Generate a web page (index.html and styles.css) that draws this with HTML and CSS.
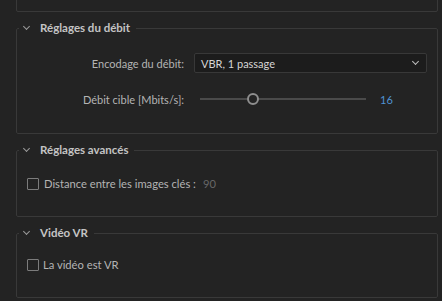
FILE: index.html
```html
<!DOCTYPE html>
<html lang="fr">
<head>
  <meta charset="UTF-8" />
  <title>Réglages</title>
  <link rel="stylesheet" href="styles.css">
</head>
<body>
  <div class="panels">
    <fieldset class="panel panel-top"></fieldset>

    <fieldset class="panel panel-bitrate">
      <legend><span class="chev"></span>Réglages du débit</legend>
      <div class="form-grid">
        <label class="lbl" for="enc">Encodage du débit:</label>
        <div class="select" id="enc">
          <span>VBR, 1 passage</span>
          <span class="select-chev"></span>
        </div>

        <label class="lbl">Débit cible [Mbits/s]:</label>
        <div class="slider-row">
          <div class="track"><span class="knob"></span></div>
          <span class="value">16</span>
        </div>
      </div>
    </fieldset>

    <fieldset class="panel panel-adv">
      <legend><span class="chev"></span>Réglages avancés</legend>
      <div class="check-row">
        <span class="box"></span>
        <span>Distance entre les images clés :</span>
        <span class="dim">90</span>
      </div>
    </fieldset>

    <fieldset class="panel panel-vr">
      <legend><span class="chev"></span>Vidéo VR</legend>
      <div class="check-row vr">
        <span class="box"></span>
        <span>La vidéo est VR</span>
      </div>
    </fieldset>
  </div>
</body>
</html>
```

FILE: styles.css
```css
html, body {
  margin: 0;
  background: #232323;
  overflow: hidden;
  height: 301px;
}
body {
  font-family: 'Lato', 'Liberation Sans', sans-serif;
  font-size: 11px;
  color: #b4b4b4;
}
.panels {
  padding: 0 4px 0 16px;
  margin-top: -40px;
}
.panel {
  margin: 0 0 9px 0;
  border: 1px solid #393939;
  border-radius: 2px;
  padding: 0;
  min-width: 0;
}
.panel-top {
  height: 50px;
}
legend {
  margin-left: 2px;
  padding: 0 6px 0 4px;
  font-weight: bold;
  font-size: 11.5px;
  color: #c4c4c4;
  line-height: 14px;
  display: flex;
  align-items: center;
}
.chev {
  width: 4px;
  height: 4px;
  border-right: 1px solid #9a9a9a;
  border-bottom: 1px solid #9a9a9a;
  transform: rotate(45deg);
  margin: -3px 11px 0 1px;
}
.form-grid {
  display: grid;
  grid-template-columns: 167px 1fr;
  column-gap: 10px;
  align-items: center;
  row-gap: 16px;
  padding: 18px 10px 24px 0;
}
.lbl {
  text-align: right;
}
.select {
  height: 18px;
  border: 1px solid #383838;
  background: #1c1c1c;
  border-radius: 2px;
  display: flex;
  align-items: center;
  justify-content: space-between;
  padding: 0 8px 0 6px;
  color: #d6d6d6;
}
.select-chev {
  width: 4px;
  height: 4px;
  border-right: 1px solid #bdbdbd;
  border-bottom: 1px solid #bdbdbd;
  transform: rotate(45deg);
  margin-top: -3px;
}
.slider-row {
  display: flex;
  align-items: center;
  height: 20px;
}
.track {
  margin-left: 6px;
  width: 166px;
  height: 2px;
  background: #4a4a4a;
  display: flex;
  align-items: center;
}
.knob {
  margin-left: 47px;
  width: 8px;
  height: 8px;
  border: 2px solid #8e8e8e;
  border-radius: 50%;
  background: #232323;
  flex: none;
}
.value {
  margin-left: 14px;
  color: #4f93d3;
}
.check-row {
  display: flex;
  align-items: center;
  gap: 5px;
  padding: 20px 10px 26px;
  font-size: 11.2px;
}
.check-row.vr {
  gap: 4px;
  padding: 18px 10px 26px;
}
.box {
  width: 10px;
  height: 10px;
  border: 1.5px solid #7c7c7c;
  border-radius: 1px;
  flex: none;
}
.dim {
  color: #676767;
  margin-left: 2px;
}
```
